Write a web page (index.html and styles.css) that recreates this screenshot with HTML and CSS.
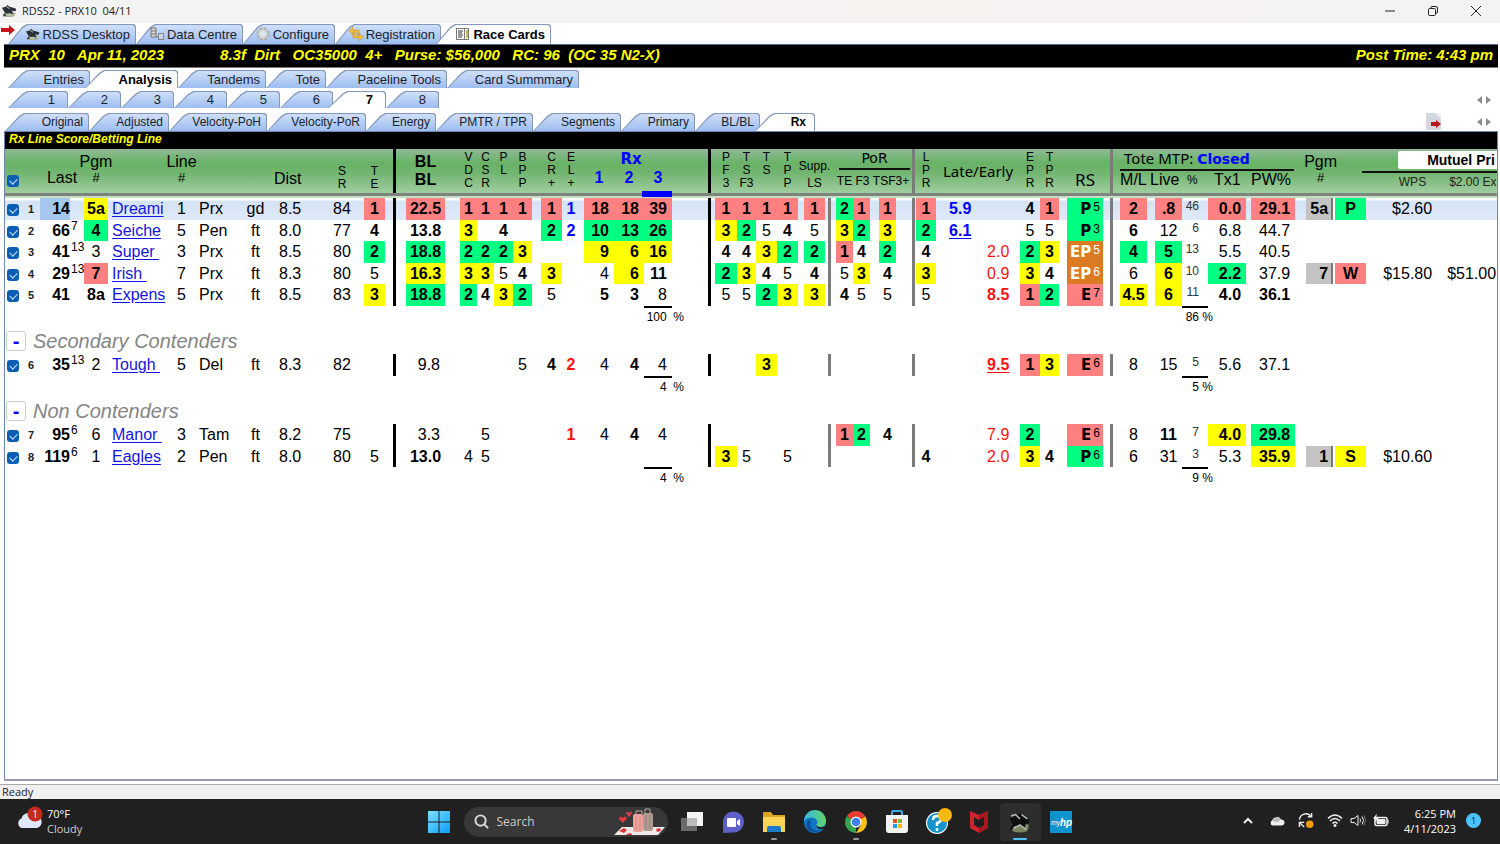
FILE: index.html
```html
<!DOCTYPE html>
<html lang="en">
<head>
<meta charset="utf-8">
<title>RDSS2 - PRX10 04/11</title>
<link rel="stylesheet" href="styles.css">
</head>
<body>
<svg class="defs" aria-hidden="true">
  <symbol id="horse" viewBox="0 0 16 16">
    <path d="M1 12q6-4 14-1l-2 3q-6 2-11 0z" fill="#a9b18f"/>
    <path d="M0 5l4-1 2-2 2 2 4 1 3 1 0 2-2 1-2-1 0 2 2 2-1 1-3-2-3 0-3 3-2 0 2-4-2-3z" fill="#2b3138"/>
    <path d="M3 11l4 2 3-1M5 4l3 2M11 12h3" stroke="#d9dfd5" fill="none"/>
  </symbol>
</svg>

<header class="titlebar">
  <svg class="i15"><use href="#horse"/></svg>
  <span>RDSS2 - PRX10&nbsp; 04/11</span>
  <div class="winbtns">
    <button aria-label="Minimize"><svg viewBox="0 0 12 12"><path d="M1 6h10"/></svg></button>
    <button aria-label="Restore"><svg viewBox="0 0 12 12"><rect x="1.500" y="3.500" width="7" height="7" rx="1"/><path d="M4 3V2q0-.5.5-.5H9q1.500 0 1.500 1.500v4.500q0 .5-.5.5H9"/></svg></button>
    <button aria-label="Close"><svg viewBox="0 0 12 12"><path d="M1 1l10 10M11 1L1 11"/></svg></button>
  </div>
</header>

<main class="app">
  <nav class="tabs main-tabs">
    <svg class="pin" viewBox="0 0 14 10"><path d="M0 3h8V0l6 5-6 5V7H0z" fill="#c4161c"/></svg>
    <button class="tab"><svg class="i13"><use href="#horse"/></svg>RDSS Desktop</button>
    <button class="tab"><svg class="i13" viewBox="0 0 14 14"><path d="M1 1h5v9H1zM1 4h5M1 7h5M6 10h3" fill="#d7d9c8" stroke="#777"/><rect x="8.500" y="6.500" width="5" height="6" fill="#c9d3df" stroke="#7f8893"/></svg>Data Centre</button>
    <button class="tab"><svg class="i13" viewBox="0 0 14 14"><circle cx="7" cy="7" r="5" fill="none" stroke="#a9a9a5" stroke-width="3" stroke-dasharray="2.600 1.300"/><circle cx="7" cy="7" r="4" fill="#dbe6f5" stroke="#d2d2cc" stroke-width="2"/></svg>Configure</button>
    <button class="tab"><svg class="i13" viewBox="0 0 14 14"><path d="M0 4l4-4v3h6v5H8V5H4v3zM14 10l-4 4v-3H4V6h2v3h4V6z" fill="#f0bd3c" stroke="#c48f25" stroke-width=".5"/></svg>Registration</button>
    <button class="tab on"><svg class="i13" viewBox="0 0 14 14"><rect x=".5" y="1.500" width="12" height="11" fill="#fff" stroke="#777"/><path d="M2 4h5M2 6h4M2 8h5M2 10h4" stroke="#333"/><path d="M8.500 2v10" stroke="#777"/><path d="M11 3v8" stroke="#c8b860" stroke-width="2"/></svg>Race Cards</button>
  </nav>

  <div class="racebar">
    <span>PRX&nbsp; 10&nbsp;&nbsp; Apr 11, 2023</span>
    <span class="cond">8.3f&nbsp; Dirt&nbsp;&nbsp; OC35000&nbsp; 4+&nbsp;&nbsp; Purse: $56,000&nbsp;&nbsp; RC: 96&nbsp; (OC 35 N2-X)</span>
    <span class="post">Post Time: 4:43 pm</span>
  </div>

  <nav class="tabs section-tabs">
    <button class="tab">Entries</button><button class="tab on">Analysis</button><button class="tab">Tandems</button><button class="tab">Tote</button><button class="tab">Paceline Tools</button><button class="tab">Card Summmary</button>
  </nav>
  <nav class="tabs race-tabs">
    <button class="tab">1</button><button class="tab">2</button><button class="tab">3</button><button class="tab">4</button><button class="tab">5</button><button class="tab">6</button><button class="tab on">7</button><button class="tab">8</button>
    <svg class="pager" viewBox="0 0 14 8"><path d="M5 0v8L0 4zM9 0v8l5-4z" fill="#8c8c8c"/></svg>
  </nav>
  <nav class="tabs view-tabs">
    <button class="tab">Original</button><button class="tab">Adjusted</button><button class="tab">Velocity-PoH</button><button class="tab">Velocity-PoR</button><button class="tab">Energy</button><button class="tab">PMTR / TPR</button><button class="tab">Segments</button><button class="tab">Primary</button><button class="tab">BL/BL</button><button class="tab on">Rx</button>
    <svg class="export" viewBox="0 0 15 17"><path d="M0 0h11l4 4v13H0z" fill="#d3d7e2"/><path d="M9 0h6v6z" fill="#eef0f5"/><path d="M5 9h5V7l5 4-5 4v-2H5z" fill="#b5161b"/></svg>
    <svg class="pager" viewBox="0 0 14 8"><path d="M5 0v8L0 4zM9 0v8l5-4z" fill="#8c8c8c"/></svg>
  </nav>

  <section class="pane">
    <h1 class="viewbar">Rx Line Score/Betting Line</h1>
    <table class="card">
      <colgroup>
        <col class="w17"><col class="w18"><col class="w30"><col class="w14"><col class="w24"><col class="w62"><col class="w23"><col class="w50"><col class="w25"><col class="w52"><col class="w44"><col class="w21"><col class="w21"><col class="w39"><col class="w15"><col class="w17"><col class="w17"><col class="w19"><col class="w19"><col class="w9"><col class="w21"><col class="w18"><col class="w4"><col class="w30"><col class="w30"><col class="w28"><col class="w43"><col class="w22"><col class="w19"><col class="w21"><col class="w21"><col class="w6"><col class="w21"><col class="w11"><col class="w17"><col class="w17"><col class="w9"><col class="w17"><col class="w20"><col class="w20"><col class="w40"><col class="w44"><col class="w20"><col class="w19"><col class="w8"><col class="w36"><col class="w17"><col class="w27"><col class="w8"><col class="w27"><col class="w26"><col class="w38"><col class="w5"><col class="w44"><col class="w11"><col class="w29"><col class="w31"><col class="w72"><col>
      </colgroup>
      <thead>
        <tr>
          <th class="ck"><input type="checkbox" checked aria-label="Select all"></th>
          <th></th>
          <th colspan="2"><div class="stack big low">Last</div></th>
          <th><div class="stack big"><span>Pgm</span><small>#</small></div></th>
          <th></th>
          <th><div class="stack big"><span>Line</span><small>#</small></div></th>
          <th colspan="2"></th>
          <th><div class="stack big low dist">Dist</div></th>
          <th><div class="stack low2"><span>S</span><span>R</span></div></th>
          <th><div class="stack low2"><span>T</span><span>E</span></div></th>
          <th class="bar"></th>
          <th><div class="stack big strong"><span>BL</span><span>BL</span></div></th>
          <th></th>
          <th><div class="stack"><span>V</span><span>D</span><span>C</span></div></th>
          <th><div class="stack"><span>C</span><span>S</span><span>R</span></div></th>
          <th><div class="stack"><span>P</span><span>L</span></div></th>
          <th><div class="stack"><span>B</span><span>P</span><span>P</span></div></th>
          <th></th>
          <th><div class="stack"><span>C</span><span>R</span><span>+</span></div></th>
          <th><div class="stack"><span>E</span><span>L</span><span>+</span></div></th>
          <th></th>
          <th colspan="3"><div class="rx"><b>Rx</b><span>1</span><span>2</span><span class="sorted">3</span></div></th>
          <th class="bar b36"></th>
          <th><div class="stack"><span>P</span><span>F</span><span>3</span></div></th>
          <th><div class="stack"><span>T</span><span>S</span><span>F3</span></div></th>
          <th><div class="stack"><span>T</span><span>S</span></div></th>
          <th><div class="stack"><span>T</span><span>P</span><span>P</span></div></th>
          <th></th>
          <th><div class="stack supp"><span>Supp.</span><span>LS</span></div></th>
          <th></th>
          <th colspan="5" class="bar grey b76"><div class="por"><b>PoR</b><span>TE</span><span>F3</span><span>TSF3+</span></div></th>
          <th><div class="stack"><span>L</span><span>P</span><span>R</span></div></th>
          <th colspan="2"><div class="stack hum mid">Late/Early</div></th>
          <th><div class="stack"><span>E</span><span>P</span><span>R</span></div></th>
          <th><div class="stack"><span>T</span><span>P</span><span>R</span></div></th>
          <th></th>
          <th><div class="stack hum low style">RS</div></th>
          <th class="bar grey b7"></th>
          <th colspan="7"><div class="tote"><div>Tote MTP: <b>Closed</b></div><span>M/L</span><span>Live</span><small>%</small><span>Tx1</span><span>PW%</span></div></th>
          <th></th>
          <th><div class="stack big"><span>Pgm</span><small>#</small></div></th>
          <th></th>
          <th colspan="2"><div class="mutuel"><b>Mutuel Pri</b><span>WPS</span><span>$2.00 Ex</span></div></th>
        </tr>
      </thead>
      <tbody>
        <tr class="current">
          <td class="ck"><input type="checkbox" checked aria-label="Select 1"></td><td class="rank">1</td><td class="last sel">14</td><td class="sup"></td><td class="y">5a</td><td class="name"><a href="#">Dreami</a></td><td>1</td><td class="trk">Prx</td><td>gd</td><td class="dst">8.5</td><td>84</td><td class="r">1</td><td class="bar"></td>
          <td class="r">22.5</td><td></td><td class="r">1</td><td class="r">1</td><td class="r">1</td><td class="r">1</td><td></td><td class="r">1</td><td class="blue">1</td><td></td><td class="r num">18</td><td class="r num">18</td><td class="r num">39</td><td class="bar b36"></td>
          <td class="r">1</td><td class="r">1</td><td class="r">1</td><td class="r">1</td><td></td><td class="r">1</td><td class="bar grey b3"></td><td class="g">2</td><td class="r">1</td><td></td><td class="r">1</td><td class="bar grey b16"></td>
          <td class="r">1</td><td class="late under">5.9</td><td></td><td class="b">4</td><td class="r">1</td><td></td><td class="rs g">P<sup>5</sup></td><td class="bar grey b7"></td>
          <td class="r">2</td><td></td><td class="r">.8</td><td class="pct">46</td><td class="r num">0.0</td><td></td><td class="r num">29.1</td><td></td><td class="fin">5a</td><td class="g">P</td><td class="pay">$2.60</td><td></td>
        </tr>
        <tr>
          <td class="ck"><input type="checkbox" checked aria-label="Select 2"></td><td class="rank">2</td><td class="last">66</td><td class="sup">7</td><td class="g">4</td><td class="name"><a href="#">Seiche</a></td><td>5</td><td class="trk">Pen</td><td>ft</td><td class="dst">8.0</td><td>77</td><td class="b">4</td><td class="bar"></td>
          <td class="b">13.8</td><td></td><td class="y">3</td><td></td><td class="b">4</td><td></td><td></td><td class="g">2</td><td class="blue">2</td><td></td><td class="g num">10</td><td class="g num">13</td><td class="g num">26</td><td class="bar b36"></td>
          <td class="y">3</td><td class="g">2</td><td>5</td><td class="b">4</td><td></td><td>5</td><td class="bar grey b3"></td><td class="y">3</td><td class="g">2</td><td></td><td class="y">3</td><td class="bar grey b16"></td>
          <td class="g">2</td><td class="late under">6.1</td><td></td><td>5</td><td>5</td><td></td><td class="rs g">P<sup>3</sup></td><td class="bar grey b7"></td>
          <td class="b">6</td><td></td><td>12</td><td class="pct">6</td><td class="num">6.8</td><td></td><td class="num">44.7</td><td colspan="5"></td>
        </tr>
        <tr>
          <td class="ck"><input type="checkbox" checked aria-label="Select 3"></td><td class="rank">3</td><td class="last">41</td><td class="sup">13</td><td>3</td><td class="name"><a href="#">Super&nbsp;</a></td><td>3</td><td class="trk">Prx</td><td>ft</td><td class="dst">8.5</td><td>80</td><td class="g">2</td><td class="bar"></td>
          <td class="g">18.8</td><td></td><td class="g">2</td><td class="g">2</td><td class="g">2</td><td class="y">3</td><td></td><td></td><td></td><td></td><td class="y num">9</td><td class="y num">6</td><td class="y num">16</td><td class="bar b36"></td>
          <td class="b">4</td><td class="b">4</td><td class="y">3</td><td class="g">2</td><td></td><td class="g">2</td><td class="bar grey b3"></td><td class="r">1</td><td class="b">4</td><td></td><td class="g">2</td><td class="bar grey b16"></td>
          <td class="b">4</td><td></td><td class="early">2.0</td><td class="g">2</td><td class="y">3</td><td></td><td class="rs o">EP<sup>5</sup></td><td class="bar grey b7"></td>
          <td class="g">4</td><td></td><td class="g">5</td><td class="pct">13</td><td class="num">5.5</td><td></td><td class="num">40.5</td><td colspan="5"></td>
        </tr>
        <tr>
          <td class="ck"><input type="checkbox" checked aria-label="Select 4"></td><td class="rank">4</td><td class="last">29</td><td class="sup">13</td><td class="r">7</td><td class="name"><a href="#">Irish&nbsp;</a></td><td>7</td><td class="trk">Prx</td><td>ft</td><td class="dst">8.3</td><td>80</td><td>5</td><td class="bar"></td>
          <td class="y">16.3</td><td></td><td class="y">3</td><td class="y">3</td><td>5</td><td class="b">4</td><td></td><td class="y">3</td><td></td><td></td><td class="num">4</td><td class="y num">6</td><td class="b num">11</td><td class="bar b36"></td>
          <td class="g">2</td><td class="y">3</td><td class="b">4</td><td>5</td><td></td><td class="b">4</td><td class="bar grey b3"></td><td>5</td><td class="y">3</td><td></td><td class="b">4</td><td class="bar grey b16"></td>
          <td class="y">3</td><td></td><td class="early">0.9</td><td class="y">3</td><td class="b">4</td><td></td><td class="rs o">EP<sup>6</sup></td><td class="bar grey b7"></td>
          <td>6</td><td></td><td class="y">6</td><td class="pct">10</td><td class="g num">2.2</td><td></td><td class="num">37.9</td><td></td><td class="fin">7</td><td class="r">W</td><td class="pay">$15.80</td><td class="exa">$51.00</td>
        </tr>
        <tr>
          <td class="ck"><input type="checkbox" checked aria-label="Select 5"></td><td class="rank">5</td><td class="last">41</td><td></td><td class="b">8a</td><td class="name"><a href="#">Expens</a></td><td>5</td><td class="trk">Prx</td><td>ft</td><td class="dst">8.5</td><td>83</td><td class="y">3</td><td class="bar"></td>
          <td class="g">18.8</td><td></td><td class="g">2</td><td class="b">4</td><td class="y">3</td><td class="g">2</td><td></td><td>5</td><td></td><td></td><td class="b num">5</td><td class="b num">3</td><td class="num">8</td><td class="bar b36"></td>
          <td>5</td><td>5</td><td class="g">2</td><td class="y">3</td><td></td><td class="y">3</td><td class="bar grey b3"></td><td class="b">4</td><td>5</td><td></td><td>5</td><td class="bar grey b16"></td>
          <td>5</td><td></td><td class="early b">8.5</td><td class="r">1</td><td class="g">2</td><td></td><td class="rs r">E<sup>7</sup></td><td class="bar grey b7"></td>
          <td class="y">4.5</td><td></td><td class="y">6</td><td class="pct">11</td><td class="b num">4.0</td><td></td><td class="b num">36.1</td><td colspan="5"></td>
        </tr>
        <tr class="total"><td colspan="25"></td><td colspan="2" class="sum1">100 &nbsp;%</td><td colspan="23"></td><td colspan="2" class="sum2">86 %</td><td colspan="7"></td></tr>
      </tbody>
      <tbody>
        <tr class="group"><th colspan="59"><div><button aria-label="Collapse Secondary Contenders">-</button>Secondary Contenders</div></th></tr>
        <tr>
          <td class="ck"><input type="checkbox" checked aria-label="Select 6"></td><td class="rank">6</td><td class="last">35</td><td class="sup">13</td><td>2</td><td class="name"><a href="#">Tough&nbsp;</a></td><td>5</td><td class="trk">Del</td><td>ft</td><td class="dst">8.3</td><td>82</td><td></td><td class="bar"></td>
          <td class="num">9.8</td><td colspan="4"></td><td>5</td><td></td><td class="b">4</td><td class="redtxt">2</td><td></td><td class="num">4</td><td class="b num">4</td><td class="num">4</td><td class="bar b36"></td>
          <td colspan="2"></td><td class="y">3</td><td colspan="3"></td><td class="bar grey b3"></td><td colspan="4"></td><td class="bar grey b16"></td>
          <td colspan="2"></td><td class="early b under">9.5</td><td class="r">1</td><td class="y">3</td><td></td><td class="rs r">E<sup>6</sup></td><td class="bar grey b7"></td>
          <td>8</td><td></td><td>15</td><td class="pct">5</td><td class="num">5.6</td><td></td><td class="num">37.1</td><td colspan="5"></td>
        </tr>
        <tr class="total"><td colspan="25"></td><td colspan="2" class="sum1">4 &nbsp;%</td><td colspan="23"></td><td colspan="2" class="sum2">5 %</td><td colspan="7"></td></tr>
      </tbody>
      <tbody>
        <tr class="group"><th colspan="59"><div><button aria-label="Collapse Non Contenders">-</button>Non Contenders</div></th></tr>
        <tr>
          <td class="ck"><input type="checkbox" checked aria-label="Select 7"></td><td class="rank">7</td><td class="last">95</td><td class="sup">6</td><td>6</td><td class="name"><a href="#">Manor&nbsp;</a></td><td>3</td><td class="trk">Tam</td><td>ft</td><td class="dst">8.2</td><td>75</td><td></td><td class="bar"></td>
          <td class="num">3.3</td><td colspan="2"></td><td>5</td><td colspan="4"></td><td class="redtxt">1</td><td></td><td class="num">4</td><td class="b num">4</td><td class="num">4</td><td class="bar b36"></td>
          <td colspan="6"></td><td class="bar grey b3"></td><td class="r">1</td><td class="g">2</td><td></td><td class="b">4</td><td class="bar grey b16"></td>
          <td colspan="2"></td><td class="early">7.9</td><td class="g">2</td><td colspan="2"></td><td class="rs r">E<sup>6</sup></td><td class="bar grey b7"></td>
          <td>8</td><td></td><td class="b">11</td><td class="pct">7</td><td class="y num">4.0</td><td></td><td class="g num">29.8</td><td colspan="5"></td>
        </tr>
        <tr>
          <td class="ck"><input type="checkbox" checked aria-label="Select 8"></td><td class="rank">8</td><td class="last">119</td><td class="sup">6</td><td>1</td><td class="name"><a href="#">Eagles</a></td><td>2</td><td class="trk">Pen</td><td>ft</td><td class="dst">8.0</td><td>80</td><td>5</td><td class="bar"></td>
          <td class="b">13.0</td><td></td><td>4</td><td>5</td><td colspan="9"></td><td class="bar b36"></td>
          <td class="y">3</td><td>5</td><td></td><td>5</td><td colspan="2"></td><td class="bar grey b3"></td><td colspan="4"></td><td class="bar grey b16"></td>
          <td class="b">4</td><td></td><td class="early">2.0</td><td class="y">3</td><td class="b">4</td><td></td><td class="rs g">P<sup>6</sup></td><td class="bar grey b7"></td>
          <td>6</td><td></td><td>31</td><td class="pct">3</td><td class="num">5.3</td><td></td><td class="y num">35.9</td><td></td><td class="fin">1</td><td class="y">S</td><td class="pay">$10.60</td><td></td>
        </tr>
        <tr class="total"><td colspan="25"></td><td colspan="2" class="sum1">4 &nbsp;%</td><td colspan="23"></td><td colspan="2" class="sum2">9 %</td><td colspan="7"></td></tr>
      </tbody>
    </table>
  </section>
</main>

<div class="status">Ready</div>

<footer class="taskbar">
  <div class="weather">
    <svg viewBox="0 0 26 26"><path d="M5 22a5 5 0 0 1-.5-9.500A7 7 0 0 1 17 10a6 6 0 0 1 3 12z" fill="#dfe8f8"/><circle cx="18" cy="8" r="7.500" fill="#c42b1c"/><text x="18" y="12" text-anchor="middle" fill="#fff">1</text></svg>
    <div>70°F<br><span>Cloudy</span></div>
  </div>
  <div class="dock">
    <button aria-label="Start"><svg viewBox="0 0 24 24"><defs><linearGradient id="win" x2="1" y2="1"><stop stop-color="#7fe0ff"/><stop offset="1" stop-color="#0a9cf5"/></linearGradient></defs><path d="M1 1h10.500v10.500H1zM12.500 1H23v10.500H12.500zM1 12.500h10.500V23H1zM12.500 12.500H23V23H12.500z" fill="url(#win)"/></svg></button>
    <label class="search">
      <svg class="lens" viewBox="0 0 16 16"><circle cx="7" cy="7" r="5.500" fill="none" stroke="#ddd" stroke-width="2"/><path d="M11 11l4 4" stroke="#ddd" stroke-width="2"/></svg>
      <input type="text" placeholder="Search" aria-label="Search">
      <svg class="trip" viewBox="0 0 52 28"><path d="M8 19h43l-7 8H0z" fill="#f1e9e7"/><path d="M5 23l5-3 3 2-3 3zM42 21l4-1 1 3-4 1zM12 26l5-1 1 2h-5z" fill="#d83a3a"/><path d="M22 6V3h6v3M31 5V1h5v4" fill="none" stroke="#b7aaa5"/><rect x="19" y="6" width="10" height="18" rx="2" fill="#efa19c"/><rect x="29" y="5" width="10" height="18" rx="2" fill="#ae9c90"/><path d="M22 8v14M26 8v14" stroke="#d68784"/><path d="M32 7v14M36 7v14" stroke="#94847a"/><path d="M9 15l-4-4q0-3 3-2l1 1q2-3 4 0zM15 9l-3-4q1-2 3 0 2-3 3 0z" fill="#e63b44"/></svg>
    </label>
    <button aria-label="Task view"><svg viewBox="0 0 24 24"><rect x="1" y="8" width="16" height="13" fill="#6b6b6b"/><rect x="7" y="2" width="16" height="14" fill="#f5f5f5"/><rect x="7" y="8" width="10" height="8" fill="#bcbcbc"/></svg></button>
    <button aria-label="Chat"><svg viewBox="0 0 24 24"><path d="M2 23V12A10.500 10.500 0 1 1 12.500 22.500z" fill="#5f5fc9"/><rect x="6" y="8" width="9" height="9" rx="1" fill="#fff"/><path d="M16 11l3-2v7l-3-2z" fill="#fff"/></svg></button>
    <button class="run" aria-label="File Explorer"><svg viewBox="0 0 24 24"><path d="M1 3q0-1 1-1h7l2 3h12v5H1z" fill="#dba520"/><path d="M1 7h22v15H1z" fill="#fbd357"/><path d="M5 22v-4q0-2 2-2h10q2 0 2 2v4z" fill="#1d79c9"/></svg></button>
    <button aria-label="Edge"><svg viewBox="0 0 24 24"><defs><linearGradient id="edge"><stop stop-color="#35b8e8"/><stop offset="1" stop-color="#62d568"/></linearGradient></defs><circle cx="12" cy="12" r="11" fill="#1275c4"/><path d="M1 11a11 11 0 0 1 22 0c0 4-3 6-6 6-3 0-4-1-4-2 1-1 2-2 1-4-2-5-10-4-13 0z" fill="url(#edge)"/><path d="M8 11c-3 6 3 12 10 9-7 5-17 0-14-8q2-3 4-1z" fill="#0c4f9a"/><path d="M13 15q3 4 10 1l1 3-4 0q-6 1-7-4z" fill="#202020"/></svg></button>
    <button class="run" aria-label="Chrome"><svg viewBox="0 0 24 24"><path d="M12 12L2.500 6.500A11 11 0 0 1 21.500 6.500z" fill="#e53c30"/><path d="M12 12l-9.500-5.500A11 11 0 0 0 12 23z" fill="#33a650"/><path d="M12 12l9.500-5.500A11 11 0 0 1 12 23l5-8z" fill="#fbc116"/><circle cx="12" cy="12" r="5.500" fill="#fff"/><circle cx="12" cy="12" r="4.300" fill="#3f7fee"/></svg></button>
    <button aria-label="Store"><svg viewBox="0 0 24 24"><path d="M7 7V2q0-1 1-1h8q1 0 1 1v5" fill="none" stroke="#3fa9dc" stroke-width="2"/><path d="M1 5h22v15q0 3-3 3H4q-3 0-3-3z" fill="#f2f2f2"/><path d="M8 9h4v4H8z" fill="#e84e27"/><path d="M13 9h4v4h-4z" fill="#7cb92e"/><path d="M8 14h4v4H8z" fill="#1c9fe2"/><path d="M13 14h4v4h-4z" fill="#f7b60f"/></svg></button>
    <button aria-label="Help"><svg class="help" viewBox="0 0 28 28"><circle cx="13" cy="15" r="11" fill="#fff"/><circle cx="13" cy="15" r="10" fill="#1593cc"/><path d="M9 12q0-4 4-4t4 3-4 4v3M13 20v3" stroke="#fff" stroke-width="2.500" fill="none"/><circle cx="21" cy="7" r="7" fill="#fbb90c"/></svg></button>
    <button aria-label="McAfee"><svg viewBox="0 0 24 24"><path d="M3 1l9 4 9-4v17l-9 5-9-5z" fill="#d1232e"/><path d="M12 5l9-4v17l-9 5z" fill="#a81822"/><path d="M7 7l5 3 5-3v8l-5 3-5-3z" fill="#202020"/></svg></button>
    <button class="run active" aria-label="RDSS2"><svg viewBox="0 0 16 16"><path d="M2 10q6-3 12 0l-1 4q-5 2-10 0z" fill="#7a8660"/><path d="M1 6l4-2 3-2 2 3 4 1 0 3-2 0-1 3-3-2-4 1-2 3-1-1 2-4z" fill="#0c0e10"/><path d="M2 4l3-1 3 3M9 3l4 3M4 12l4-2 4 3" stroke="#b9bfb7" fill="none"/></svg></button>
    <button aria-label="myHP"><svg viewBox="0 0 24 24"><rect x="1" y="1" width="22" height="22" fill="#0f93cf"/><text class="my" x="2" y="15">my</text><text class="hp" x="11" y="16">hp</text></svg></button>
  </div>
  <div class="tray">
    <svg viewBox="0 0 12 12"><path d="M2 8l4-4 4 4" fill="none" stroke="#eee" stroke-width="2"/></svg>
    <svg class="i17" viewBox="0 0 16 12"><path d="M3 11a3 3 0 0 1 0-5 5 5 0 0 1 9-1 3 3 0 0 1 1 6z" fill="#eee"/><path d="M3 6a5 5 0 0 1 9-1L8 8z" fill="#bbb"/></svg>
    <svg class="i17" viewBox="0 0 16 16"><path d="M1 7a7 7 0 0 1 12-4M14 0v4h-4M1 15v-5h5M1 10l5 5" fill="none" stroke="#eee" stroke-width="1.500"/><circle cx="12" cy="12" r="4" fill="#f69a0d"/></svg>
    <div class="net">
      <svg class="i17" viewBox="0 0 16 14"><path d="M1 5q7-7 14 0M3 7.500q5-5 10 0M5.500 10q2.500-2.500 5 0" fill="none" stroke="#eee" stroke-width="1.500"/><circle cx="8" cy="12" r="1.500" fill="#eee"/></svg>
      <svg class="i17" viewBox="0 0 16 14"><path d="M1 5h3l4-3v10L4 9H1z" fill="none" stroke="#eee"/><path d="M10 5q1 2 0 4M12 3q3 4 0 8" fill="none" stroke="#eee"/><path d="M14 2q3 5 0 10" fill="none" stroke="#777"/></svg>
      <svg class="i17" viewBox="0 0 16 14"><rect x="2" y="4" width="12" height="8" rx="1.500" fill="none" stroke="#eee" stroke-width="1.500"/><path d="M4 6h8v4H4zM15 6v4" fill="#eee" stroke="#eee"/><path d="M4 0L0 5h3L1 9l5-5H3z" fill="#fff"/></svg>
    </div>
    <time>6:25 PM<br>4/11/2023</time>
    <span class="badge">1</span>
  </div>
</footer>
</body>
</html>
```
FILE: styles.css
```css
* { box-sizing: border-box; }
body {
  margin: 0;
  min-height: 100vh;
  display: flex;
  flex-direction: column;
  background: #fff;
  color: #000;
  font-family: "Liberation Sans", Arial, sans-serif;
  font-size: 16px;
  overflow: hidden;
}
button { font: inherit; border: 0; padding: 0; background: none; color: inherit; }
.defs { position: absolute; width: 0; height: 0; }

/* window title */
.titlebar {
  height: 23px;
  display: flex;
  align-items: center;
  gap: 5px;
  padding: 0 0 2px 2px;
  background: linear-gradient(90deg, #f3f3f3 40%, #f7f1ef 60%, #f3f3f3);
  font: 11px "Open Sans", "Noto Sans", sans-serif;
  color: #222;
}
.i15 { width: 15px; height: 15px; }
.i13 { width: 14px; height: 14px; flex: none; }
.winbtns { margin-left: auto; display: flex; gap: 31px; padding-right: 18px; }
.winbtns button { width: 12px; height: 12px; display: flex; }
.winbtns svg { width: 12px; height: 12px; fill: none; stroke: #222; }

/* tab strips */
.app { flex: 1; display: flex; flex-direction: column; }
.tabs { display: flex; align-items: stretch; padding-left: 8px; position: relative; }
.tab {
  position: relative;
  z-index: 0;
  display: flex;
  align-items: center;
  justify-content: flex-end;
  gap: 3px;
  padding-right: 6px;
  font-size: 13px;
  color: #1a1f2c;
  white-space: nowrap;
  flex: none;
}
.tab::before, .tab::after {
  content: "";
  position: absolute;
  z-index: -2;
  inset: 0;
  background: #8398bd;
  clip-path: polygon(0 100%, 14px 3px, 19px 0, calc(100% - 2px) 0, 100% 2px, 100% 100%);
}
.tab::after {
  z-index: -1;
  inset: 1px 1px 0 1px;
  background: linear-gradient(#cfdff8, #b9d0f5 45%, #9dbdf0);
}
.tab.on { font-weight: bold; color: #000; z-index: 1; }
.tab.on::before, .tab.on::after { left: -5px; }
.tab.on::after { left: -4px; background: #fff; }
.main-tabs { height: 21px; padding-top: 1px; }
.main-tabs .tab:nth-of-type(1) { width: 128px; }
.main-tabs .tab:nth-of-type(2) { width: 107px; }
.main-tabs .tab:nth-of-type(3) { width: 92px; }
.main-tabs .tab:nth-of-type(4) { width: 106px; }
.main-tabs .tab:nth-of-type(5) { width: 110px; }
.pin { position: absolute; left: 1px; top: 2px; width: 14px; height: 10px; z-index: 2; }
.racebar {
  height: 24px;
  margin: 0 2px 0 4px;
  padding: 0 5px 3px;
  display: flex;
  align-items: center;
  background: #000;
  color: #ff0;
  border-top: 1px solid #4f678f;
  border-bottom: 1px solid #777;
  font: italic bold 15px "Liberation Sans", Arial, sans-serif;
  white-space: nowrap;
}
.cond { margin-left: 56px; }
.post { margin-left: auto; }
.section-tabs { height: 20px; padding-top: 2px; }
.section-tabs .tab:nth-child(1) { width: 82px; }
.section-tabs .tab:nth-child(2), .section-tabs .tab:nth-child(3) { width: 88px; }
.section-tabs .tab:nth-child(4) { width: 60px; }
.section-tabs .tab:nth-child(5) { width: 121px; }
.section-tabs .tab:nth-child(6) { width: 132px; }
.race-tabs { height: 20px; padding-top: 3px; }
.race-tabs .tab { width: 53px; padding-right: 13px; }
.race-tabs .tab:first-child { width: 60px; }
.view-tabs { height: 23px; padding-top: 5px; padding-left: 5px; }
.view-tabs .tab { font-size: 12px; }
.view-tabs .tab:nth-child(1) { width: 84px; }
.view-tabs .tab:nth-child(2) { width: 80px; }
.view-tabs .tab:nth-child(3) { width: 98px; }
.view-tabs .tab:nth-child(4) { width: 99px; }
.view-tabs .tab:nth-child(5) { width: 70px; }
.view-tabs .tab:nth-child(6) { width: 97px; }
.view-tabs .tab:nth-child(7) { width: 88px; }
.view-tabs .tab:nth-child(8) { width: 74px; }
.view-tabs .tab:nth-child(9) { width: 65px; }
.view-tabs .tab:nth-child(10) { width: 55px; padding-right: 9px; }
.pager { width: 14px; height: 8px; margin: auto 9px auto auto; }
.export { width: 15px; height: 17px; margin-left: auto; }
.export + .pager { margin-left: 36px; }

/* race table */
.pane {
  flex: 1;
  margin: 0 2px 0 4px;
  border: 1px solid #6f86ad;
  border-bottom: 2px solid #9a9aae;
  overflow: hidden;
}
.viewbar {
  margin: 0;
  height: 17px;
  padding-left: 4px;
  background: #000;
  color: #ff0;
  font: italic bold 12px/15px "Liberation Sans", Arial, sans-serif;
}
.card { table-layout: fixed; border-collapse: collapse; width: 100%; min-width: 1492px; }
.w4 { width: 4px; } .w5 { width: 5px; } .w6 { width: 6px; } .w8 { width: 8px; }
.w9 { width: 9px; } .w11 { width: 11px; } .w14 { width: 14px; } .w15 { width: 15px; }
.w17 { width: 17px; } .w18 { width: 18px; } .w19 { width: 19px; } .w20 { width: 20px; }
.w21 { width: 21px; } .w22 { width: 22px; } .w23 { width: 23px; } .w24 { width: 24px; }
.w25 { width: 25px; } .w26 { width: 26px; } .w27 { width: 27px; } .w28 { width: 28px; }
.w29 { width: 29px; } .w30 { width: 30px; } .w31 { width: 31px; } .w36 { width: 36px; }
.w38 { width: 38px; } .w39 { width: 39px; } .w40 { width: 40px; } .w43 { width: 43px; }
.w44 { width: 44px; } .w50 { width: 50px; } .w52 { width: 52px; } .w62 { width: 62px; }
.w72 { width: 72px; }
.card td, .card th { padding: 0; text-align: center; font-weight: normal; white-space: nowrap; line-height: 18px; }
.card tbody tr { height: 22px; }
.card tbody tr:nth-child(even) { height: 21px; }
.card tbody + tbody tr:nth-child(2) { height: 22px; }
.card tbody + tbody tr:nth-child(3) { height: 21px; }
.card thead tr {
  height: 49px;
  background: linear-gradient(#8fb996, #68b266 14px, #72b570 24px, #a0cda0 44px, #7d837d 44px, #7d837d 47px, #c4dfc3 47px);
}
.card thead th { vertical-align: top; }
.current { background: linear-gradient(#fff 2px, #d5e3f6 3px, #dfe9f8); }

.stack {
  height: 45px;
  padding-top: 2px;
  display: flex;
  flex-direction: column;
  align-items: center;
  font-size: 12px;
  line-height: 13px;
}
.stack.big { font-size: 16px; line-height: 18px; padding-top: 4px; }
.stack.big small { font-size: 13px; line-height: 13px; }
.stack.low { padding-top: 20px; }
.stack.low2 { padding-top: 16px; }
.stack.strong { font-weight: bold; }
.stack.dist { align-items: flex-start; padding-left: 6px; padding-top: 21px; }
.stack.supp { padding-top: 9px; line-height: 17px; }
.stack.hum { font-family: "Noto Sans", "Open Sans", sans-serif; font-size: 15px; line-height: 18px; }
.stack.style { font-size: 17px; padding-top: 22px; }
.stack.mid { padding-top: 13px; }
.rx {
  display: grid;
  grid-template-columns: 30px 30px 28px;
  color: #00f;
  font-weight: bold;
  height: 49px;
  grid-template-rows: 20px 1fr;
}
.rx b { grid-column: 1 / -1; padding-left: 6px; font: bold 15px/20px "DejaVu Sans", sans-serif; }
.sorted { position: relative; }
.sorted::after { content: ""; position: absolute; left: -2px; right: 0; bottom: 1px; height: 6px; background: #00f; }
.por {
  display: grid;
  grid-template-columns: 17px 17px 38px;
  column-gap: 1px;
  width: 74px;
  font-size: 12px;
}
.por b { grid-column: 1 / -1; margin: 0 0 2px 3px; border-bottom: 2px solid #111; font: 14px/19px "DejaVu Sans", sans-serif; }
.tote { display: grid; grid-template-columns: 30px 37px 27px 37px 43px; text-align: left; }
.tote div { grid-column: 1 / -1; padding-left: 4px; border-bottom: 2px solid #111; font: 15px/19px "Noto Sans", sans-serif; }
.tote b { font: bold 14px/19px "DejaVu Sans", sans-serif; color: #00f; }
.tote small { font-size: 12px; }
.mutuel { display: grid; grid-template-columns: 64px 1fr; font-size: 12px; margin-left: -4px; }
.mutuel b {
  grid-column: 1 / -1;
  margin: 2px 0 2px 36px;
  padding-left: 29px;
  background: #fff;
  border-radius: 2px 0 0 2px;
  font-size: 14px;
  text-align: left;
}
.mutuel span { border-top: 2px solid #111; padding-top: 1px; line-height: 17px; color: #222; text-align: right; }
.mutuel span:last-child { padding-left: 23px; text-align: left; }

.card .bar { background: linear-gradient(#000, #000) 8px 0 / 3px 100% no-repeat; }
.card .bar.grey { background-image: linear-gradient(#7b7b7b, #7b7b7b); }
.card thead .bar { background-size: 3px 44px; }
.card .b36 { background-position-x: 36px; }
.card .b3 { background-position-x: 3px; }
.card .b7 { background-position-x: 7px; }
.card .b16 { background-position-x: 16px; }
.card .b76 { background-position-x: 76px; }

.card .r, .card .g, .card .y, .card .b, .card .last { font-weight: bold; }
.r { background: #ff8080; }
.g { background: #00ff80; }
.y { background: #ff0; }
.card .num { text-align: right; padding-right: 5px; }
.card .last { text-align: right; }
.sel { background: #a6c8f0; }
.card .last + td { text-align: left; padding-left: 1px; }
.card .sup { vertical-align: top; font-size: 12px; line-height: 13px; }
.card .rank { font-size: 11px; font-weight: bold; color: #222; }
.card .name { text-align: left; padding-left: 4px; }
.name a { color: #1515e0; text-decoration: underline; text-underline-offset: 2px; }
.card .trk { text-align: left; padding-left: 6px; }
.card .dst { text-align: left; padding-left: 11px; }
.card .blue, .card .late { color: #00f; font-weight: bold; }
.card .late { text-align: left; padding-left: 13px; }
.card .early { text-align: left; padding-left: 11px; color: #f11; }
.card .redtxt { color: #f11; font-weight: bold; }
.under { text-decoration: underline; text-underline-offset: 2px; }
.current .under { text-decoration: none; }
.card .rs { text-align: right; padding-right: 3px; font: bold 15px/18px "DejaVu Sans", sans-serif; }
.rs sup { font: 12px/1 "Liberation Sans", Arial, sans-serif; line-height: 0; vertical-align: 3px; margin-left: 2px; }
.card .o { background: #dc7a22; color: #fff; }
.card .pct { text-align: right; padding-right: 9px; font-size: 12px; line-height: 17px; vertical-align: top; color: #333; }
.card .fin {
  font-weight: bold;
  text-align: right;
  padding-right: 7px;
  background: linear-gradient(90deg, #c3c3c3 25px, #777 25px, #777 27px, #fff 27px);
}
.card .pay { text-align: right; padding-right: 6px; }
.card .exa { text-align: left; padding-left: 9px; }
.card .total td { font-size: 12px; text-align: right; }
.card .total .sum1 { padding-right: 31px; background: linear-gradient(#000, #000) 0 0 / 28px 2px no-repeat; }
.card .total .sum2 { padding-right: 33px; background: linear-gradient(#000, #000) 0 0 / 26px 2px no-repeat; }
.card tbody tr.group { height: 27px; }
.group div { display: flex; align-items: center; gap: 7px; padding-left: 1px; font: italic 20px/24px "Liberation Sans", Arial, sans-serif; color: #858585; }
.group button {
  width: 20px;
  height: 20px;
  border: 1px solid #ccc;
  border-radius: 3px;
  color: #00f;
  font: bold 20px/16px "Liberation Sans", Arial, sans-serif;
}
.ck input {
  appearance: none;
  display: block;
  position: relative;
  width: 12px;
  height: 12px;
  margin: 2px 0 0 2px;
  border-radius: 3px;
  background: #0a5fb5;
}
.ck input::after {
  content: "";
  position: absolute;
  left: 3px;
  top: 3px;
  width: 6px;
  height: 4px;
  border: solid #cfe2f5;
  border-width: 0 0 1px 1px;
  transform: rotate(-45deg);
}
thead .ck input { margin-top: 26px; }

/* status line and taskbar */
.status {
  height: 15px;
  margin-top: 3px;
  padding-left: 2px;
  background: #f0f0f0;
  border-top: 1px solid #aaa;
  font: 11px/14px "Open Sans", "Noto Sans", sans-serif;
  color: #222;
}
.taskbar {
  height: 45px;
  display: grid;
  grid-template-columns: 1fr auto 1fr;
  align-items: center;
  background: #202020;
  color: #fff;
  font: 11px/15px "Open Sans", "Noto Sans", sans-serif;
}
.weather { display: flex; gap: 4px; padding: 0 0 2px 17px; }
.weather svg { width: 26px; height: 26px; font-size: 10px; }
.weather span { color: #ccc; }
.dock { display: flex; align-items: center; }
.dock button { position: relative; width: 41px; height: 38px; display: flex; align-items: center; justify-content: center; border-radius: 4px; }
.dock button svg { width: 24px; height: 24px; }
.dock button .help { width: 28px; height: 28px; }
.run::after { content: ""; position: absolute; bottom: 1px; width: 6px; height: 2px; border-radius: 1px; background: #999; }
.dock .active { background: #2d2d2d; }
.active::after { width: 14px; background: #4cc2ff; }
.my { font: italic 7px "Liberation Sans", sans-serif; fill: #fff; }
.hp { font: italic bold 10px "Liberation Sans", sans-serif; fill: #fff; }
.search {
  width: 204px;
  height: 30px;
  margin: 0 4px;
  padding: 0 2px 0 10px;
  display: flex;
  align-items: center;
  border-radius: 15px;
  background: #383838;
}
.lens { width: 15px; height: 15px; flex: none; }
.search input { flex: 1; min-width: 0; margin-left: 8px; padding: 0; border: 0; background: none; font: 12px "Open Sans", sans-serif; }
.search input::placeholder { color: #ccc; opacity: 1; }
.trip { width: 52px; height: 28px; flex: none; }
.tray { display: flex; align-items: center; justify-content: flex-end; gap: 13px; padding: 0 19px 2px 0; }
.tray > svg:first-child { width: 12px; height: 12px; margin-right: 2px; }
.i17 { width: 16px; height: 15px; }
.net { display: flex; gap: 7px; margin-right: 2px; }
.tray time { text-align: right; }
.badge { width: 15px; height: 15px; margin-left: -3px; border-radius: 50%; background: #4cc2ff; color: #123; text-align: center; font-size: 9px; }
```
